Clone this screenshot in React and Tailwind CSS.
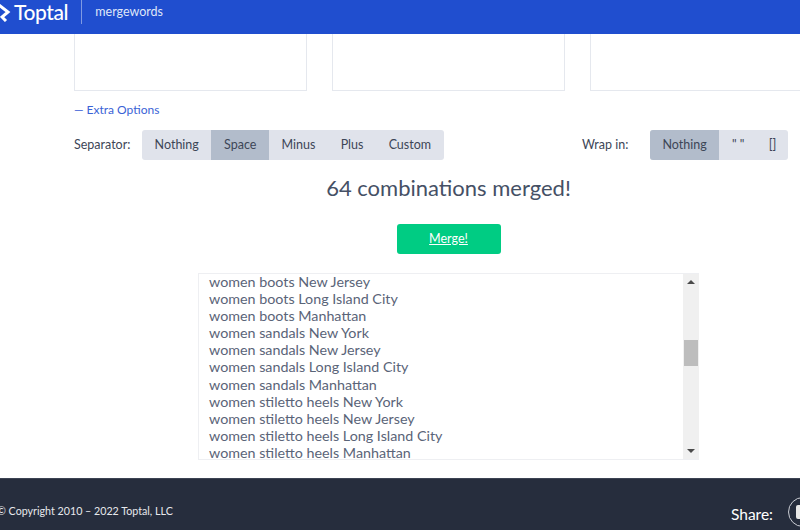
const sepOptions = ["Nothing", "Space", "Minus", "Plus", "Custom"];
const wrapOptions = ["Nothing", '" "', "[]"];

const results = [
  "women boots New Jersey",
  "women boots Long Island City",
  "women boots Manhattan",
  "women sandals New York",
  "women sandals New Jersey",
  "women sandals Long Island City",
  "women sandals Manhattan",
  "women stiletto heels New York",
  "women stiletto heels New Jersey",
  "women stiletto heels Long Island City",
  "women stiletto heels Manhattan",
];

const Segmented = ({ options, active }) => (
  <div className="flex h-[30px] overflow-hidden rounded-[3px] bg-[#e0e3eb]">
    {options.map((o) => (
      <button
        key={o}
        className={`text-[12.5px] text-[#3d4657] ${o === "[]" ? "w-[31px]" : "px-[12.6px]"} ${o === active ? "bg-[#b2bccb]" : ""}`}
      >
        {o}
      </button>
    ))}
  </div>
);

const App = () => {
  return (
    <div className="flex h-[530px] w-[800px] flex-col overflow-hidden bg-white font-['Lato',sans-serif] text-[#455065]">
      {/* Header */}
      <header className="flex h-[34px] shrink-0 items-center bg-[#204ecf] pb-[10px] text-white">
        <svg width="12" height="18" viewBox="0 0 12 18" className="mt-[2px] shrink-0">
          <path d="M-1 1 L8 8 L2 13 L6 17" fill="none" stroke="#fff" strokeWidth="3" />
        </svg>
        <span className="ml-[2px] text-[21px] font-medium tracking-[-0.4px]">Toptal</span>
        <div className="ml-[13px] h-[24px] w-px bg-[#7f9ae3]" />
        <span className="ml-[13px] text-[12.5px] text-[#dfe6f8]">mergewords</span>
      </header>

      <main className="ml-[74px] w-[749px] flex-1 shrink-0">
        {/* Input boxes, cut off by the scroll */}
        <div className="flex gap-[25px]">
          <div className="h-[57px] w-[233px] shrink-0 border border-t-0 border-[#e5e8ee]" />
          <div className="h-[57px] w-[233px] shrink-0 border border-t-0 border-[#e5e8ee]" />
          <div className="h-[57px] w-[233px] shrink-0 border border-t-0 border-[#e5e8ee]" />
        </div>

        <div className="mt-[10px] text-[12px] leading-[18px] text-[#3a62d6]">— Extra Options</div>

        <div className="mt-[11px] flex w-[714px] items-center justify-between">
          <div className="flex items-center">
            <span className="w-[68px] text-[12.5px] text-[#3d4657]">Separator:</span>
            <Segmented options={sepOptions} active="Space" />
          </div>
          <div className="flex items-center">
            <span className="w-[68px] text-[12.5px] text-[#3d4657]">Wrap in:</span>
            <Segmented options={wrapOptions} active="Nothing" />
          </div>
        </div>

        <h2 className="mt-[13px] text-center text-[22px] leading-[30px] text-[#455065]">64 combinations merged!</h2>

        <div className="mt-[21px] flex justify-center">
          <button className="h-[30px] w-[104px] rounded-[3px] bg-[#00cc83] text-[12.5px] text-white underline">Merge!</button>
        </div>

        {/* Result list */}
        <div className="mx-auto mt-[19px] flex h-[187px] w-[501px] overflow-hidden border border-r-0 border-[#eeeff2]">
          <div className="-mt-[1px] flex-1 overflow-hidden pl-[10px] text-[14.3px] leading-[17.1px] text-[#5a6478]">
            {results.map((r) => (
              <div key={r}>{r}</div>
            ))}
          </div>
          <div className="flex w-[16px] flex-col items-center bg-[#f0f0f0]">
            <svg width="8" height="4" viewBox="0 0 8 4" className="mt-[6px]"><path d="M4 0 L8 4 L0 4 Z" fill="#4a4a4a" /></svg>
            <div className="mt-[56px] h-[26px] w-[14px] bg-[#bdbdbd]" />
            <svg width="8" height="4" viewBox="0 0 8 4" className="mt-auto mb-[6px]"><path d="M0 0 L8 0 L4 4 Z" fill="#4a4a4a" /></svg>
          </div>
        </div>
      </main>

      {/* Footer */}
      <footer className="flex h-[52px] shrink-0 justify-between border-t border-[#3c4454] bg-[#262d3d] text-white">
        <span className="-ml-[3px] mt-[24px] text-[10.7px] leading-[16px] whitespace-nowrap text-[#e6e8ec]">© Copyright 2010 – 2022 Toptal, LLC</span>
        <div className="-mr-[18px] mt-[18px] flex h-[30px] shrink-0 items-center gap-[15px]">
          <span className="mt-[6px] text-[15.5px]">Share:</span>
          <div className="flex h-[30px] w-[30px] items-center justify-center rounded-full border border-[#c9ccd3]">
            <div className="h-[14px] w-[14px] rounded-[2px] bg-[#e8e8e8]" />
          </div>
        </div>
      </footer>
    </div>
  );
};

export default App;
